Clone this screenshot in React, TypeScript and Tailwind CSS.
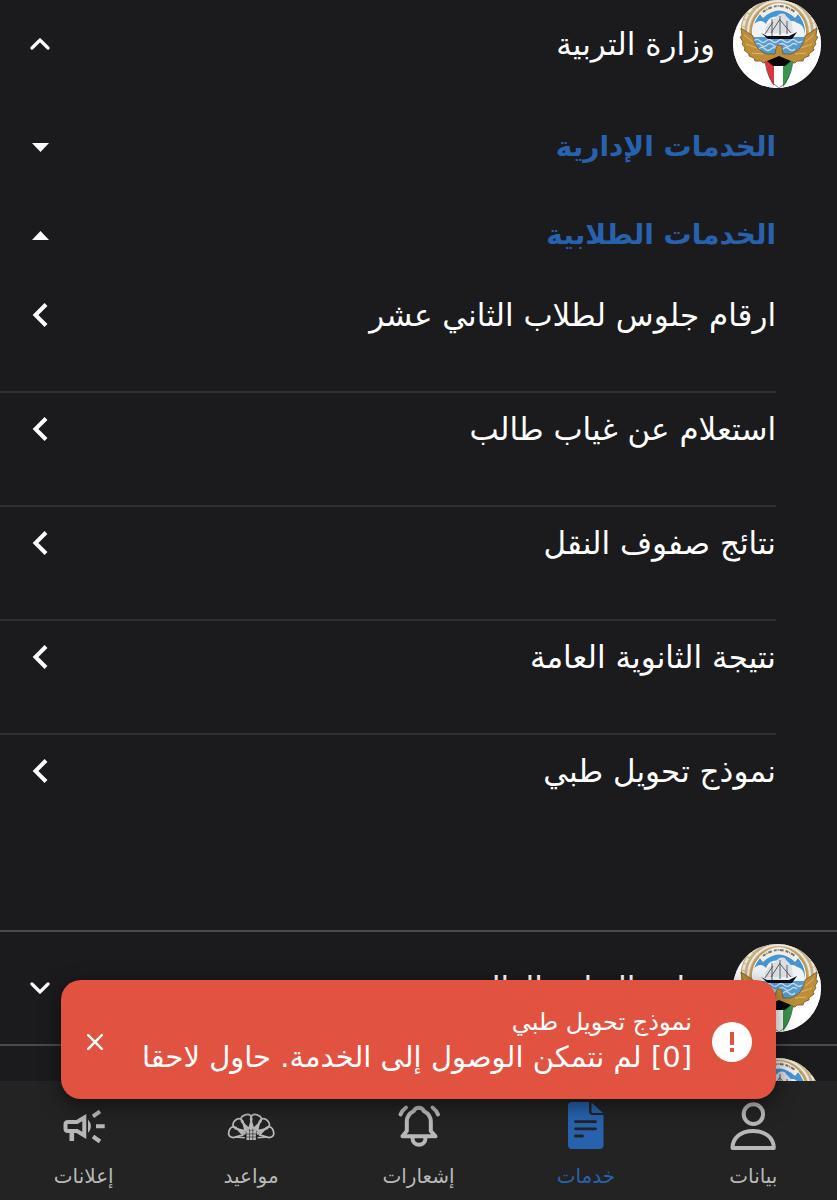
import { useState, type ReactNode } from "react";
import { clsx } from "clsx";

const services = [
  "ارقام جلوس لطلاب الثاني عشر",
  "استعلام عن غياب طالب",
  "نتائج صفوف النقل",
  "نتيجة الثانوية العامة",
  "نموذج تحويل طبي",
];

function Emblem() {
  return (
    <svg viewBox="0 0 88 88" className="size-[88px] shrink-0 rounded-full bg-white" aria-hidden="true">
      {/* Wreath */}
      <g fill="none">
        <circle cx="46" cy="32" r="33" stroke="#c2b08d" strokeWidth="11" />
        <circle cx="46" cy="32" r="36" stroke="#eee5d0" strokeWidth="2.500" strokeDasharray="6 1" />
        <circle cx="46" cy="32" r="31" stroke="#efe8d8" strokeWidth="2" />
        <circle cx="46" cy="32" r="28" stroke="#c19a52" strokeWidth="2" />
      </g>
      <path d="M0 30H10L46 52 82 30H88V88H0Z" fill="#fff" />
      {/* Sky, clouds and sea */}
      <circle cx="46" cy="32" r="26" fill="#4595d3" />
      <path d="M20 37c-1-6-1-13 4-15 3-2 7-1 9 2 2-6 8-9 13-7 4 0 7 2 8 6 4-3 8-2 10 0 5 1 8 5 8 14Z" fill="#eef3f8" />
      <path d="M21 37h50c0 12-10 21-25 21S21 49 21 37Z" fill="#559bcf" />
      <g fill="none" stroke="#c5ddef" strokeWidth="1.200">
        <path d="M21 41q3-3 6 0t6 0 6 0 6 0 6 0 6 0 6 0 6 0" />
        <path d="M22 45q3-3 6 0t6 0 6 0 6 0 6 0 6 0 6 0" />
        <path d="M26 49q3-3 6 0t6 0 6 0 6 0 6 0 6 0" />
      </g>
      {/* Banner */}
      <path d="M26 13Q46-7 66 13L62 18Q46 3 30 18Z" fill="#f1eee8" />
      <path d="M30 12Q46 0 62 12" fill="none" stroke="#77736d" strokeWidth="2" strokeDasharray="3 1 1 1 4 2" />
      {/* Dhow */}
      <path d="M32 33c0-5 2-9 6-11l3-3 4-4c3-2 7-2 8 1 3 3 6 5 6 9l1 8Z" fill="#dcdfe2" />
      <path d="M39 19v17M47 16v19M54 21v13M32 34l8-12M38 33l9-14M47 20l11 13" stroke="#4a4e54" strokeWidth=".900" />
      <path d="M28 33 34 36h22l8-4-5 7H35Z" fill="#0a0d12" />
      {/* Falcon */}
      <path
        d="M8 28 9 36 7 37 10 42 9 44 12 48 11 50 16 54 16 56 21 58 22 61 28 61 30 63 37 62 40 60 46 58 52 60 55 62 62 63 64 61 70 61 71 58 76 56 76 54 81 50 80 48 83 44 82 42 85 37 83 36 84 28 72 36 C71 45 66 51 58 54L50 54 49 48C49 44 43 44 43 48L42 54 34 54C26 51 21 45 20 36Z"
        fill="#bd8d38"
        stroke="#6f5424"
        strokeWidth=".800"
        strokeLinejoin="round"
      />
      <path d="M11 35 20 42M13 44 24 48M19 53 30 54M81 35 72 42M79 44 68 48M73 53 62 54" stroke="#dcb66c" />
      {/* Shield */}
      <path d="M32 61h10v26q-7-7-10-26Z" fill="#e0343f" />
      <path d="M41 61h10v27H41Z" fill="#fff" />
      <path d="M50 61h10q-3 19-10 26Z" fill="#36984b" />
      <path d="M34 61 46 56 58 61 52 66H40Z" fill="#080808" />
      <path d="M32 62q3 20 14 26 11-6 14-26" fill="none" stroke="#4a4a4a" strokeWidth=".700" />
    </svg>
  );
}

function Chevron({ direction }: { direction: "up" | "down" }) {
  return (
    <svg viewBox="0 0 20 12" className="h-3 w-5" fill="none" stroke="white" strokeWidth="3.200" strokeLinecap="round" aria-hidden="true">
      <path d={direction === "up" ? "M2 10l8-8 8 8" : "M2 2l8 8 8-8"} />
    </svg>
  );
}

type MinistryProps = { name?: string; open?: boolean };

function Ministry({ name, open = false }: MinistryProps) {
  return (
    <button type="button" aria-expanded={open} className="flex w-full items-center gap-[18px] pr-4 pl-[30px] text-right text-white">
      <Emblem />
      <span className="flex-1 text-[31px] leading-10">{name}</span>
      <Chevron direction={open ? "up" : "down"} />
    </button>
  );
}

function Category({ name, open = false }: { name: string; open?: boolean }) {
  return (
    <button
      type="button"
      aria-expanded={open}
      className="flex h-[88px] w-full items-center justify-between pr-[61px] pl-8 text-[28px] leading-10 font-bold text-[#2862ae]"
    >
      {name}
      <svg viewBox="0 0 17 9" className="h-[9px] w-[17px]" fill="white" aria-hidden="true">
        <path d={open ? "M0 9 8.500 0 17 9Z" : "M0 0h17L8.500 9Z"} />
      </svg>
    </button>
  );
}

function PersonIcon() {
  return (
    <g fill="none" stroke="currentColor" strokeWidth="4">
      <rect x="14.700" y="2.300" width="19.400" height="19.600" rx="9.700" />
      <path d="M3.500 46c0-10 8-17 20.600-17s20.700 7 20.700 17Z" strokeLinejoin="round" />
    </g>
  );
}

function DocumentIcon() {
  return (
    <>
      <path d="M10 0h17v9q0 4 4 4h10.500v30q0 4-4 4H10q-4 0-4-4V4q0-4 4-4Z" fill="currentColor" />
      <path d="M29.500.500 41 11H31q-1.500 0-1.500-1.500Z" fill="currentColor" />
      <path d="M13.500 19.700h20M13.500 26.800h20M13.500 34h7" stroke="#232323" strokeWidth="2.800" strokeLinecap="round" />
    </>
  );
}

function BellIcon() {
  return (
    <g fill="none" stroke="currentColor" strokeWidth="4" strokeLinecap="round" strokeLinejoin="round">
      <path d="M7.500 34.300 11.800 29V19.500c0-5 3-8.500 7-10.500 1.500-4.500 8.500-4.500 10 0 4 2 7 5.500 7 10.500V29l4.700 5.300Z" />
      <path d="M17.500 36c0 9 13 9 13 0" />
      <path d="M5.500 12.500Q7 8.500 11 5.500M43 12.500Q41.500 8.500 37.500 5.500" />
    </g>
  );
}

function FanIcon() {
  const petals = [-75, -45, -15, 15, 45, 75];
  return (
    <>
      <g fill="none" stroke="currentColor" strokeWidth="1.800" strokeLinejoin="round">
        {petals.map((angle) => (
          <g key={angle} transform={`rotate(${angle} 24.200 35)`}>
            <path d="M24.200 26.500 19 18q-1-6 5.200-6t5.200 6Z" />
            <path d="M20 19.500 21.800 29M28.400 19.500 26.600 29" strokeWidth="1.500" />
          </g>
        ))}
      </g>
      <path d="M19.500 29h9.400v9H19.500Z" fill="currentColor" />
      <path d="M22.500 29v9M25.800 29v9M19.500 32h9.400M19.500 35h9.400" stroke="#232323" strokeWidth=".600" />
    </>
  );
}

function MegaphoneIcon() {
  return (
    <g fill="none" stroke="currentColor" strokeWidth="4">
      <path d="M24.300 15.500 17 20H8q-2.500 0-2.500 2.500v4Q5.500 29 8 29h9l7.300 4.500Z" />
      <path d="M11.800 29v10" strokeWidth="4.600" />
      <path d="M28 17.500q6 6.500 0 13.500Z" fill="currentColor" strokeWidth="0" />
      <path d="M33 14.300l7-5M36 24.300h8.700M33 34.500l7 5" />
    </g>
  );
}

const tabs: { label: string; icon: ReactNode; active?: boolean }[] = [
  { label: "بيانات", icon: <PersonIcon /> },
  { label: "خدمات", icon: <DocumentIcon />, active: true },
  { label: "إشعارات", icon: <BellIcon /> },
  { label: "مواعيد", icon: <FanIcon /> },
  { label: "إعلانات", icon: <MegaphoneIcon /> },
];

function Toast({ onClose }: { onClose: () => void }) {
  return (
    <div
      role="alert"
      className="absolute inset-x-[61px] bottom-[101px] flex items-center gap-5 rounded-[20px] bg-[#e15241] px-6 pt-[26px] pb-[22px] text-white shadow-[0_6px_20px_rgba(0,0,0,0.5)]"
    >
      <svg viewBox="0 0 40 40" className="size-10 shrink-0" aria-hidden="true">
        <circle cx="20" cy="20" r="20" fill="white" />
        <path d="M20 10v13M20 26v4" stroke="#e15241" strokeWidth="4" />
      </svg>
      <div className="min-w-0 flex-1 whitespace-nowrap">
        <p className="text-[24px] leading-8">نموذج تحويل طبي</p>
        <p className="text-[29px] leading-[39px]">[0] لم نتمكن الوصول إلى الخدمة. حاول لاحقا</p>
      </div>
      <button type="button" aria-label="إغلاق" onClick={onClose} className="flex size-5 items-center justify-center">
        <svg viewBox="0 0 16 16" className="size-4" stroke="white" strokeWidth="2.400" strokeLinecap="round" aria-hidden="true">
          <path d="M1.200 1.200l13.600 13.600M14.800 1.200 1.200 14.800" />
        </svg>
      </button>
    </div>
  );
}

export default function App() {
  const [showToast, setShowToast] = useState(true);

  return (
    <div dir="rtl" lang="ar" className="relative flex h-screen flex-col bg-[#1b1b1d] font-['DejaVu_Sans',sans-serif]">
      <main className="min-h-0 flex-1 overflow-hidden">
        <section className="border-b-2 border-[#4a4a4c] pb-[83px]">
          <Ministry name="وزارة التربية" open />
          <div className="pt-[15px]">
            <Category name="الخدمات الإدارية" />
            <Category name="الخدمات الطلابية" open />
          </div>
          <ul className="mr-[61px]">
            {services.map((service) => (
              <li key={service} className="border-b-2 border-[#313133] last:border-b-0">
                <a href="#" className="flex h-28 items-start justify-between pt-4 pl-8 text-[31px] leading-10 text-white">
                  {service}
                  <svg viewBox="0 0 16 24" className="mt-2 h-6 w-4" fill="none" stroke="white" strokeWidth="4" aria-hidden="true">
                    <path d="M14 1.500 3.500 12 14 22.500" />
                  </svg>
                </a>
              </li>
            ))}
          </ul>
        </section>
        <section className="border-b-2 border-[#4a4a4c] py-3">
          <Ministry name="وزارة التعليم العالي" />
        </section>
        <section className="py-3">
          <Ministry />
        </section>
      </main>

      <nav className="grid h-[119px] shrink-0 grid-cols-5 bg-[#232323]">
        {tabs.map((tab) => (
          <a
            key={tab.label}
            href="#"
            aria-current={tab.active ? "page" : undefined}
            className={clsx("flex flex-col items-center gap-3 pt-[21px]", tab.active ? "text-[#2862ae]" : "text-[#b8b8b8]")}
          >
            <svg viewBox="0 0 48 48" className="size-12 overflow-visible" aria-hidden="true">
              {tab.icon}
            </svg>
            <span className="text-[20px] leading-7">{tab.label}</span>
          </a>
        ))}
      </nav>

      {showToast && <Toast onClose={() => setShowToast(false)} />}
    </div>
  );
}
